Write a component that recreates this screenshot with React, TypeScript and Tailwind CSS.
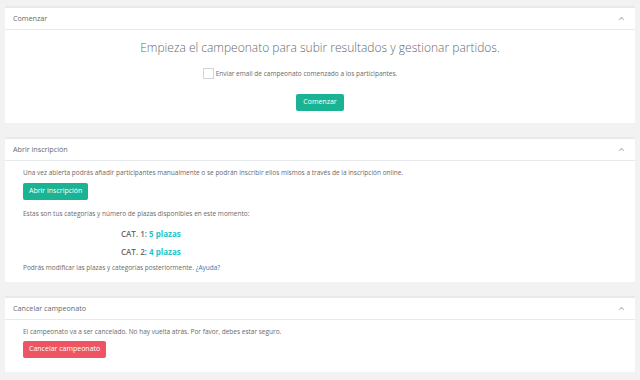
import { ChevronUp } from "lucide-react";

function Panel({ title, children }: { title: string; children: React.ReactNode }) {
  return (
    <section className="bg-white border-t-2 border-[#e7eaec]">
      <header className="h-[22px] flex items-center justify-between pl-[8px] pr-[9px] border-b border-[#e7eaec]">
        <h5 className="text-[7.2px] text-[#676a6c]">{title}</h5>
        <ChevronUp className="w-[9px] h-[9px] text-[#c4c4c4]" strokeWidth={3} />
      </header>
      {children}
    </section>
  );
}

export default function App() {
  return (
    <main
      className="h-[380px] w-[640px] bg-[#f2f2f2] px-[5px] pt-[6px] flex flex-col gap-[14px] text-[#676a6c] text-[6.5px]"
      style={{ fontFamily: '"Open Sans", sans-serif' }}
    >
      <Panel title="Comenzar">
        <div className="flex flex-col items-center pt-[10px] pb-[12px]">
          <h2 className="text-[12px] font-light leading-[16px]">
            Empieza el campeonato para subir resultados y gestionar partidos.
          </h2>
          <label className="mt-[12px] mr-[40px] h-[11px] flex items-center gap-[2px]">
            <span className="w-[11px] h-[11px] border border-[#d5d5d5] bg-white" />
            <span>Enviar email de campeonato comenzado a los participantes.</span>
          </label>
          <button className="mt-[15px] h-[17px] px-[7px] rounded-[2px] bg-[#1ab394] text-white text-[7px]">
            Comenzar
          </button>
        </div>
      </Panel>

      <Panel title="Abrir inscripción">
        <div className="pl-[18px] pt-[6px] pb-[8px] flex flex-col items-start">
          <p className="leading-[12px]">
            Una vez abierta podrás añadir participantes manualmente o se podrán inscribir ellos mismos a través de la inscripción online.
          </p>
          <button className="mt-[4px] h-[17px] px-[6px] rounded-[2px] bg-[#1ab394] text-white text-[7px]">
            Abrir inscripción
          </button>
          <p className="mt-[8px] leading-[12px]">
            Estas son tus categorías y número de plazas disponibles en este momento:
          </p>
          <div className="pl-[98px] mt-[8px] flex flex-col gap-[6px] text-[8px] font-semibold leading-[12px]">
            <div>
              CAT. 1: <span className="text-[#23c6c8] font-bold">5 plazas</span>
            </div>
            <div>
              CAT. 2: <span className="text-[#23c6c8] font-bold">4 plazas</span>
            </div>
          </div>
          <p className="mt-[4px] leading-[12px]">
            Podrás modificar las plazas y categorías posteriormente. <span className="text-[#337ab7]">¿Ayuda?</span>
          </p>
        </div>
      </Panel>

      <Panel title="Cancelar campeonato">
        <div className="pl-[18px] pt-[6px] pb-[14px] flex flex-col items-start">
          <p className="leading-[12px]">
            El campeonato va a ser cancelado. No hay vuelta atrás. Por favor, debes estar seguro.
          </p>
          <button className="mt-[3px] h-[17px] px-[6px] rounded-[2px] bg-[#ed5565] text-white text-[7px]">
            Cancelar campeonato
          </button>
        </div>
      </Panel>
    </main>
  );
}
